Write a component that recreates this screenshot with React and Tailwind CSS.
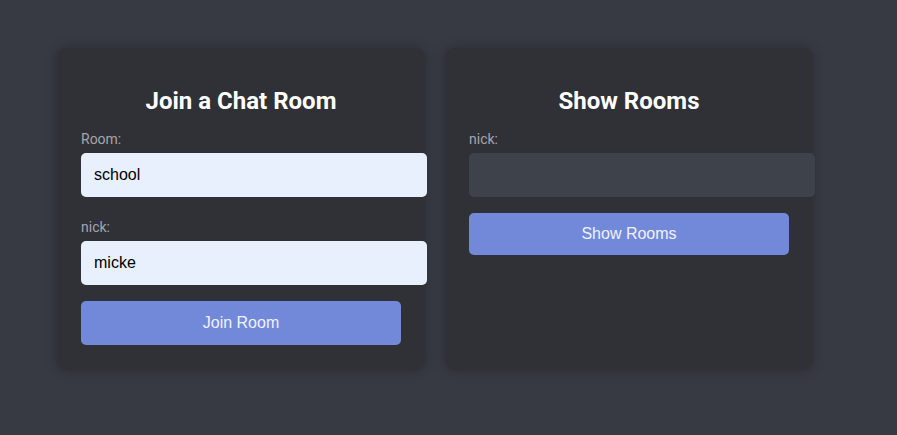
import React from 'react'

const font = { fontFamily: 'Roboto, "Liberation Sans", sans-serif' }

const Field = ({ label, value, light, className = '' }) => (
  <div className={className}>
    <label className="block text-[14px] leading-[20px] text-[#a3a6ad] mb-[4px]">{label}</label>
    <input
      readOnly
      value={value}
      className={`box-content w-[320px] h-[42px] px-[12px] border border-transparent rounded-[5px] text-[16px] font-['Liberation_Sans',Arial,sans-serif] outline-none ${
        light ? 'bg-[#e8f0fe] text-black' : 'bg-[#3e424a] text-white'
      }`}
    />
  </div>
)

const Card = ({ title, children }) => (
  <div className="w-[368px] bg-[#303136] rounded-[10px] shadow-[0_0_12px_rgba(0,0,0,0.25)] px-[24px] pt-[38px] pb-[25px]">
    <h2 className="text-center text-white font-bold text-[24px] leading-[31px] mb-[12px]">{title}</h2>
    {children}
  </div>
)

const btn = "mt-[16px] w-[320px] rounded-[5px] bg-[#7289da] text-[#f0f2ff] text-[16px] font-['Liberation_Sans',Arial,sans-serif]"

const App = () => {
  return (
    <div className="w-full min-h-[435px] bg-[#373a43] pl-[57px] pt-[48px]" style={font}>
      <div className="flex gap-[20px] items-stretch">
        <Card title="Join a Chat Room">
          <Field label="Room:" value="school" light className="mb-[20px]" />
          <Field label="nick:" value="micke" light />
          <button className={`${btn} h-[44px]`}>Join Room</button>
        </Card>
        <Card title="Show Rooms">
          <Field label="nick:" value="" />
          <button className={`${btn} h-[42px]`}>Show Rooms</button>
        </Card>
      </div>
    </div>
  )
}

export default App
